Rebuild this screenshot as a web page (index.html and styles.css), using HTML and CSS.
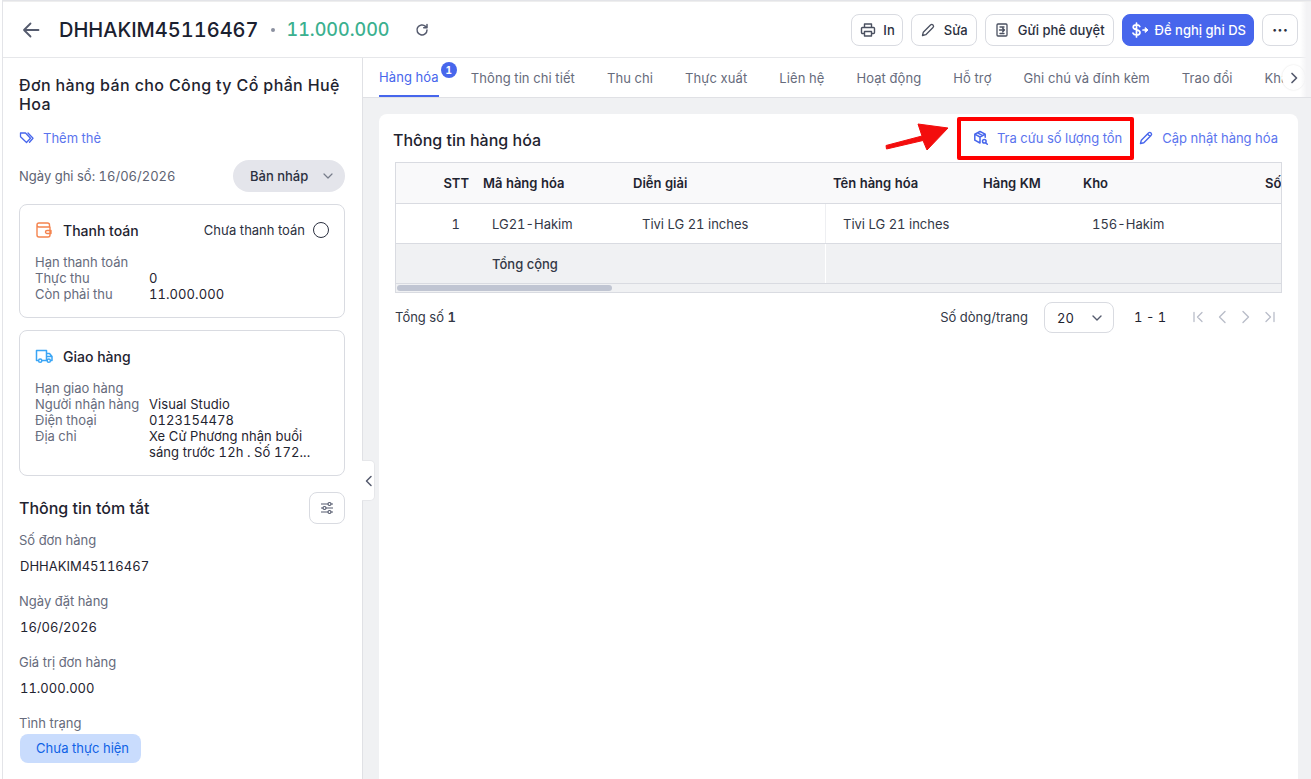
FILE: index.html
```html
<!DOCTYPE html>
<html lang="vi">
<head>
<meta charset="utf-8">
<title>DHHAKIM45116467</title>
<link rel="stylesheet" href="styles.css">
</head>
<body>
<div class="app">
  <header class="topbar">
    <button class="back" aria-label="Quay lại"><svg width="20" height="20" viewBox="0 0 20 20" fill="none" stroke="#555b6e" stroke-width="1.8" stroke-linecap="round" stroke-linejoin="round"><path d="M17.5 10H3M9.5 3.5 3 10l6.500 6.500"/></svg></button>
    <h1 class="code">DHHAKIM45116467</h1>
    <span class="dot"></span>
    <span class="amount">11.000.000</span>
    <svg class="reload" width="16" height="16" viewBox="0 0 16 16" fill="none" stroke="#555b6e" stroke-width="1.500" stroke-linecap="round" stroke-linejoin="round"><path d="M13 8a5 5 0 1 1-1.500-3.600L13 5.800M13 2.500v3.300H9.700"/></svg>
    <div class="actions">
      <button class="btn btn-in"><svg width="16" height="16" viewBox="0 0 16 16" fill="none" stroke="#4a5060" stroke-width="1.400" stroke-linejoin="round"><path d="M4.500 5.500V2h7v3.500M4.500 11.500H2.500a1 1 0 0 1-1-1v-4a1 1 0 0 1 1-1h11a1 1 0 0 1 1 1v4a1 1 0 0 1-1 1h-2M4.500 9.500h7V14h-7z"/></svg>In</button>
      <button class="btn"><svg width="16" height="16" viewBox="0 0 16 16" fill="none" stroke="#4a5060" stroke-width="1.300" stroke-linejoin="round"><path d="m2.500 13.500.8-3.300 7.200-7.200a1.500 1.500 0 0 1 2.500 2.500l-7.200 7.200z"/></svg>Sửa</button>
      <button class="btn"><svg width="16" height="16" viewBox="0 0 16 16" fill="none" stroke="#4a5060" stroke-width="1.300" stroke-linecap="round" stroke-linejoin="round"><path d="M4 2h8a1 1 0 0 1 1 1v10a1 1 0 0 1-1 1H4a1 1 0 0 1-1-1V3a1 1 0 0 1 1-1zM5.500 8h5M8.700 6.200l1.800 1.800-1.800 1.800M6 5h4M6 11.500h4"/></svg>Gửi phê duyệt</button>
      <button class="btn primary"><svg width="20" height="16" viewBox="0 0 20 16" fill="none" stroke="#fff" stroke-width="1.700" stroke-linecap="round" stroke-linejoin="round"><path d="M9.800 4.500C9.300 3.300 8 2.900 6.500 2.900 4.800 2.900 3.200 3.600 3.200 5.200 3.200 8.300 10 7 10 10.500c0 1.700-1.700 2.500-3.500 2.500-1.600 0-3-.6-3.500-1.900M6.500 1v14M13 8h3"/><path d="M15.500 5.800 18 8l-2.500 2.200z" fill="#fff" stroke-width="1"/></svg>Đề nghị ghi DS</button>
      <button class="btn more" aria-label="Thêm">···</button>
    </div>
  </header>

  <div class="body">
    <aside class="side">
      <h2 class="order-title">Đơn hàng bán cho Công ty Cổ phần Huệ Hoa</h2>
      <a class="tag"><svg width="16" height="16" viewBox="0 0 16 16" fill="none" stroke="#4766ec" stroke-width="1.300" stroke-linejoin="round" stroke-linecap="round"><path d="M1.500 3h5l5 5.200-4 4.300-6-5.700zM9 3l5 5.200-3.500 4"/></svg>Thêm thẻ</a>
      <div class="status-row">
        <span class="date">Ngày ghi sổ: 16/06/2026</span>
        <span class="pill">Bản nháp<svg width="12" height="12" viewBox="0 0 12 12" fill="none" stroke="#777c8a" stroke-width="1.200" stroke-linecap="round" stroke-linejoin="round"><path d="m2 4 4 4 4-4"/></svg></span>
      </div>

      <section class="panel pay">
        <div class="panel-head">
          <svg width="18" height="18" viewBox="0 0 18 18" fill="none" stroke="#f4844f" stroke-width="1.400" stroke-linejoin="round"><path d="M2 4a2 2 0 0 1 2-2h8.500a2 2 0 0 1 2 2v1.500M2 4v10a2 2 0 0 0 2 2h9a2 2 0 0 0 2-2V6H4a2 2 0 0 1-2-2zM12 9.500h4v3h-4a1.500 1.500 0 0 1 0-3z"/></svg>
          <span class="panel-title">Thanh toán</span>
          <span class="pay-state">Chưa thanh toán</span>
          <span class="ring"></span>
        </div>
        <dl class="info">
          <dt>Hạn thanh toán</dt><dd></dd>
          <dt>Thực thu</dt><dd>0</dd>
          <dt>Còn phải thu</dt><dd>11.000.000</dd>
        </dl>
      </section>

      <section class="panel ship">
        <div class="panel-head">
          <svg width="18" height="18" viewBox="0 0 18 18" fill="none" stroke="#3aa5f5" stroke-width="1.500" stroke-linejoin="round"><path d="M3.500 13.500H1.500V3.500h10v10H7M11.500 6.500h3l2.500 3v4h-1.500M11.500 13.500h.8M11.500 9.500H17"/><circle cx="5.200" cy="13.700" r="1.600"/><circle cx="13.800" cy="13.700" r="1.600"/></svg>
          <span class="panel-title">Giao hàng</span>
        </div>
        <dl class="info">
          <dt>Hạn giao hàng</dt><dd></dd>
          <dt>Người nhận hàng</dt><dd>Visual Studio</dd>
          <dt>Điện thoại</dt><dd>0123154478</dd>
          <dt>Địa chỉ</dt><dd>Xe Cử Phương nhận buổi sáng trước 12h . Số 172...</dd>
        </dl>
      </section>

      <div class="summary-head">
        <h3>Thông tin tóm tắt</h3>
        <button class="icon-btn" aria-label="Tùy chỉnh"><svg width="16" height="16" viewBox="0 0 16 16" fill="none" stroke="#555b6e" stroke-width="1.200"><path d="M2 4h7M12 4h2M2 8h2M7 8h7M2 12h7M12 12h2"/><circle cx="10.500" cy="4" r="1.500"/><circle cx="5.500" cy="8" r="1.500"/><circle cx="10.500" cy="12" r="1.500"/></svg></button>
      </div>
      <div class="field"><div class="f-label">Số đơn hàng</div><div class="f-val">DHHAKIM45116467</div></div>
      <div class="field"><div class="f-label">Ngày đặt hàng</div><div class="f-val">16/06/2026</div></div>
      <div class="field"><div class="f-label">Giá trị đơn hàng</div><div class="f-val">11.000.000</div></div>
      <div class="field"><div class="f-label">Tình trạng</div><span class="chip">Chưa thực hiện</span></div>

      <button class="collapse" aria-label="Thu gọn"><svg width="10" height="12" viewBox="0 0 10 12" fill="none" stroke="#555b6e" stroke-width="1.500" stroke-linecap="round" stroke-linejoin="round"><path d="M7 1.500 2.500 6 7 10.500"/></svg></button>
    </aside>

    <main class="main">
      <div class="tabbar">
        <nav class="tabs">
          <a class="tab active">Hàng hóa<span class="badge">1</span></a>
          <a class="tab">Thông tin chi tiết</a>
          <a class="tab">Thu chi</a>
          <a class="tab">Thực xuất</a>
          <a class="tab">Liên hệ</a>
          <a class="tab">Hoạt động</a>
          <a class="tab">Hỗ trợ</a>
          <a class="tab">Ghi chú và đính kèm</a>
          <a class="tab">Trao đổi</a>
          <a class="tab">Khác</a>
        </nav>
        <button class="tab-next" aria-label="Tiếp"><svg width="10" height="12" viewBox="0 0 10 12" fill="none" stroke="#555b6e" stroke-width="1.700" stroke-linecap="round" stroke-linejoin="round"><path d="M3 1.500 7.500 6 3 10.500"/></svg></button>
      </div>

      <div class="content">
        <section class="card">
          <div class="card-head">
            <h2>Thông tin hàng hóa</h2>
            <div class="links">
              <a class="link"><svg width="16" height="16" viewBox="0 0 16 16" fill="none" stroke="#4766ec" stroke-width="1.500" stroke-linejoin="round" stroke-linecap="round"><path d="M7 1.500 1.800 4.200v6L7 13M7 1.500l5.200 2.700v3M1.800 4.200 7 7l5.200-2.800M7 7v6M4.500 2.900l5.200 2.700"/><circle cx="11.300" cy="11.300" r="1.800"/><path d="m12.700 12.700 1.600 1.600"/></svg>Tra cứu số lượng tồn</a>
              <a class="link"><svg width="16" height="16" viewBox="0 0 16 16" fill="none" stroke="#4766ec" stroke-width="1.400" stroke-linejoin="round"><path d="m2.500 13.500.8-3.300 7.200-7.200a1.500 1.500 0 0 1 2.500 2.500l-7.200 7.200zM9.500 4l2.500 2.500"/></svg>Cập nhật hàng hóa</a>
            </div>
          </div>

          <div class="table">
            <div class="tr th">
              <div class="c c-stt">STT</div><div class="c">Mã hàng hóa</div><div class="c">Diễn giải</div><div class="c">Tên hàng hóa</div><div class="c">Hàng KM</div><div class="c">Kho</div><div class="c">Số lượng</div>
            </div>
            <div class="tr td">
              <div class="c c-stt">1</div><div class="c">LG21-Hakim</div><div class="c">Tivi LG 21 inches</div><div class="c sep">Tivi LG 21 inches</div><div class="c"></div><div class="c">156-Hakim</div><div class="c"></div>
            </div>
            <div class="tr td total">
              <div class="c c-stt"></div><div class="c">Tổng cộng</div><div class="c"></div><div class="c sep"></div><div class="c"></div><div class="c"></div><div class="c"></div>
            </div>
            <div class="hscroll"><div class="thumb"></div></div>
          </div>

          <div class="pager">
            <span class="count">Tổng số <b>1</b></span>
            <span class="per">Số dòng/trang</span>
            <span class="select">20<svg width="12" height="12" viewBox="0 0 12 12" fill="none" stroke="#555b6e" stroke-width="1.400" stroke-linecap="round" stroke-linejoin="round"><path d="m2 4 4 4 4-4"/></svg></span>
            <span class="range">1 - 1</span>
            <span class="nav">
              <svg width="12" height="12" viewBox="0 0 12 12" fill="none" stroke="#b9bdc9" stroke-width="1.300" stroke-linecap="round" stroke-linejoin="round"><path d="M2 1.500v9M10 1.500 5.500 6l4.500 4.500"/></svg>
              <svg width="12" height="14" viewBox="0 0 12 14" fill="none" stroke="#b9bdc9" stroke-width="1.400" stroke-linecap="round" stroke-linejoin="round"><path d="M9 1.500 3.500 7 9 12.500"/></svg>
              <svg width="12" height="14" viewBox="0 0 12 14" fill="none" stroke="#b9bdc9" stroke-width="1.400" stroke-linecap="round" stroke-linejoin="round"><path d="M3 1.500 8.500 7 3 12.500"/></svg>
              <svg width="12" height="12" viewBox="0 0 12 12" fill="none" stroke="#b9bdc9" stroke-width="1.300" stroke-linecap="round" stroke-linejoin="round"><path d="M10 1.500v9M2 1.500 6.500 6 2 10.500"/></svg>
            </span>
          </div>
        </section>
      </div>
    </main>
  </div>
</div>

<div class="edge"></div>
<div class="mark-box"></div>
<svg class="mark-arrow" width="68" height="34" viewBox="0 0 68 34"><path d="M2 24.500 38 15 34 3 64 7 43 29 39 19.500 2.500 28z" fill="#f30d0d" stroke="#f30d0d" stroke-linejoin="round" stroke-width="1"/></svg>
</body>
</html>
```
FILE: styles.css
```css
* { box-sizing: border-box; }
html, body { margin: 0; height: 100%; overflow: hidden; background: #fff; }
body { font-family: Inter, "Noto Sans", sans-serif; font-size: 13px; color: #1f2430; font-variant-numeric: tabular-nums; }
h1, h2, h3, dl, dd, dt { margin: 0; font-weight: 500; }
button { font: inherit; font-variant-numeric: tabular-nums; color: inherit; background: #fff; cursor: pointer; }

.app { height: 779px; margin-left: 2px; padding-top: 1px; background: #e3e4e8; padding-left: 1px; display: flex; flex-direction: column; }

.topbar { height: 57px; flex: none; background: #fff; border-bottom: 1px solid #e6e7ea; border-top: 1px solid #eee; display: flex; align-items: center; padding-left: 18px; }
.back { border: 0; padding: 0; width: 20px; height: 20px; background: none; margin-right: 18px; }
.code { font-size: 20px; line-height: 28px; font-weight: 500; color: #1b2130; }
.dot { width: 4px; height: 4px; border-radius: 50%; background: #8b90a0; margin: 0 12px; }
.amount { font-size: 18px; color: #3bb08f; font-weight: 500; }
.reload { margin-left: 24px; }
.actions { margin-left: auto; display: flex; gap: 8px; padding-right: 13px; }
.btn { height: 32px; border: 1px solid #d9dbe1; border-radius: 8px; padding: 0 8px; display: flex; align-items: center; gap: 8px; font-weight: 500; font-size: 13px; color: #2b3040; white-space: nowrap; }
.btn-in { padding: 0 7px 0 8px; gap: 7px; }
.btn.primary { background: #4766ec; border-color: #4766ec; color: #fff; gap: 5px; padding: 0 7px; }
.btn.more { width: 36px; justify-content: center; font-size: 16px; padding: 0; font-weight: 700; }

.body { flex: 1; display: flex; min-height: 0; }

.side { position: relative; width: 360px; flex: none; background: #fff; border-right: 1px solid #e0e1e5; padding: 18px 17px 0 16px; }
.order-title { font-size: 16px; line-height: 19px; letter-spacing: .38px; font-weight: 500; color: #1f2430; }
.tag { display: flex; align-items: center; gap: 8px; margin-top: 15px; color: #5b74ee; height: 18px; }
.status-row { display: flex; justify-content: space-between; align-items: center; margin-top: 13px; height: 32px; }
.date { color: #5e6373; }
.pill { width: 112px; height: 32px; border-radius: 16px; background: #e4e5eb; display: flex; align-items: center; justify-content: space-between; padding: 0 11px 0 17px; font-weight: 500; color: #2b3040; }

.panel { border: 1px solid #d9dbe1; border-radius: 8px; padding: 16px 15px; }
.pay { margin-top: 12px; height: 114px; }
.ship { margin-top: 12px; height: 146px; }
.panel-head { display: flex; align-items: center; height: 18px; gap: 10px; }
.panel-title { font-size: 14px; font-weight: 500; color: #1f2430; }
.pay-state { margin-left: auto; color: #2b3040; }
.ring { width: 16px; height: 16px; border: 1.500px solid #2b3040; border-radius: 50%; margin-left: -2px; }
.info { display: grid; grid-template-columns: 114px 1fr; margin-top: 15px; line-height: 16px; }
.info dt { font-weight: 400; color: #666b7c; }
.info dd { font-weight: 400; color: #1f2430; letter-spacing: .08px; }

.summary-head { display: flex; justify-content: space-between; align-items: center; margin-top: 16px; height: 32px; }
.summary-head h3 { font-size: 16px; font-weight: 500; }
.icon-btn { width: 36px; height: 32px; border: 1px solid #d9dbe1; border-radius: 8px; display: flex; align-items: center; justify-content: center; padding: 0; }
.field { margin-top: 7px; }
.field + .field { margin-top: 17px; }
.f-label { color: #666b7c; line-height: 18px; }
.f-val { margin: 8px 0 0 1px; line-height: 18px; color: #1f2430; }
.chip { display: block; margin: 2px 0 0 1px; height: 29px; width: 121px; line-height: 29px; border-radius: 8px; background: #c9dcfd; color: #0f62e6; padding-left: 16px; }

.collapse { position: absolute; right: -13px; top: 402px; width: 13px; height: 41px; padding: 0 0 0 1px; border: 1px solid #e6e7ea; border-left: 0; border-radius: 0 5px 5px 0; display: flex; align-items: center; justify-content: center; background: #fff; z-index: 2; }

.main { flex: 1; min-width: 0; background: #f0f1f3; display: flex; flex-direction: column; }
.tabbar { position: relative; height: 40px; flex: none; background: #fff; border-bottom: 1px solid #e0e1e5; }
.tabs { display: flex; gap: 32px; padding-left: 16px; height: 39px; white-space: nowrap; overflow: hidden; }
.tab { position: relative; line-height: 40px; color: #666b7c; letter-spacing: .09px; }
.tab.active { color: #4766ec; border-bottom: 2px solid #4766ec; line-height: 38px; }
.badge { position: absolute; top: 4px; right: -18px; width: 16px; height: 16px; border-radius: 50%; background: #4766ec; color: #fff; font-size: 10px; font-weight: 700; line-height: 16px; text-align: center; }
.tab-next { position: absolute; top: 7px; right: 6px; width: 23px; height: 25px; border: 0; border-radius: 50%; padding: 0; background: #fff; box-shadow: 0 0 2px rgba(0,0,0,.12); display: flex; align-items: center; justify-content: center; }

.content { flex: 1; padding: 16px 13px 0 16px; min-height: 0; }
.card { height: 100%; background: #fff; border-radius: 8px 8px 0 0; padding: 0 16px; }
.card-head { display: flex; justify-content: space-between; align-items: center; height: 48px; }
.card-head h2 { font-size: 16px; font-weight: 500; margin-left: -2px; padding-top: 3px; }
.links { display: flex; gap: 16px; margin-right: 4px; }
.link { display: flex; align-items: center; gap: 8px; color: #5b74ee; }

.table { border: 1px solid #d9dbe1; overflow: hidden; height: 131px; }
.tr { display: grid; grid-template-columns: 79px 150px 200px 150px 100px 182px 200px; height: 40px; border-bottom: 1px solid #d9dbe1; align-items: stretch; width: 1061px; }
.c { display: flex; align-items: center; padding-left: 17px; white-space: nowrap; }
.th { height: 41px; background: #f9f9fa; font-weight: 600; color: #1f2430; }
.th .c { padding-left: 8px; }
.th .c-stt { padding: 0 6px 0 0; justify-content: flex-end; }
.td { color: #333846; }
.td .c-stt { padding: 0 15px 0 0; justify-content: flex-end; }
.sep { border-left: 1px solid #eeeff2; }
.total { background: #f0f1f3; font-weight: 500; }
.total .sep { border-left-color: #fff; }
.hscroll { height: 8px; background: #f0f1f3; padding: 1px; }
.thumb { width: 215px; height: 6px; background: #c0c5d2; border-radius: 3px; }

.pager { display: flex; align-items: center; height: 30px; margin-top: 9px; }
.count { color: #333846; }
.count b { font-weight: 600; }
.per { margin-left: auto; color: #333846; }
.select { align-self: flex-start; width: 70px; height: 31px; border: 1px solid #d9dbe1; border-radius: 8px; margin-left: 16px; display: flex; align-items: center; justify-content: space-between; padding: 0 10px 0 12px; }
.range { margin-left: 20px; width: 58px; }
.nav { display: flex; align-items: center; gap: 12px; margin-right: 6px; }

.edge { position: absolute; left: 1300px; top: 2px; width: 11px; height: 95px; background: linear-gradient(to right, rgba(243,243,245,0), #f3f3f5 60%); }
.mark-box { position: absolute; left: 957px; top: 117px; width: 177px; height: 43px; border: 4px solid #f00; border-radius: 2px; }
.mark-arrow { position: absolute; left: 884px; top: 121px; }
```
